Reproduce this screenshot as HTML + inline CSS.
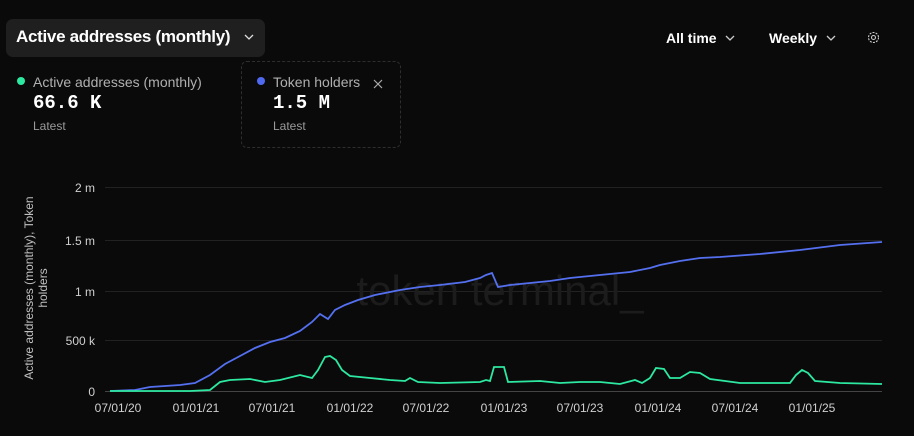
<!DOCTYPE html><html><head><style>
body{margin:0;width:914px;height:436px;background:#0a0a0a;font-family:"Liberation Sans",sans-serif;color:#fff;position:relative;overflow:hidden}
.abs{position:absolute}
.sel{left:6px;top:19px;width:259px;height:38px;background:#1f1f1f;border-radius:7px}
.sel span{position:absolute;left:10px;top:8px;font-size:17px;font-weight:bold;letter-spacing:-0.3px}
.lbl{font-size:14px;color:#b0b0b0}
.val{font-family:"Liberation Mono",monospace;font-size:19px;font-weight:bold}
.lat{font-size:12px;color:#9a9a9a}
.dot{width:8px;height:8px;border-radius:50%}
.tick{font-size:12px;color:#d0d0d0}
</style></head><body>
<div class="abs sel"><span>Active addresses (monthly)</span>
<svg class="abs" style="left:238px;top:15px" width="10" height="7"><path d="M1 1L5 5L9 1" stroke="#ddd" fill="none" stroke-width="1.3"/></svg></div>
<div class="abs" style="left:666px;top:30px;font-size:14px;font-weight:bold">All time</div>
<svg class="abs" style="left:725px;top:35px" width="10" height="7"><path d="M1 1L5 5L9 1" stroke="#ccc" fill="none" stroke-width="1.3"/></svg>
<div class="abs" style="left:769px;top:30px;font-size:14px;font-weight:bold">Weekly</div>
<svg class="abs" style="left:826px;top:35px" width="10" height="7"><path d="M1 1L5 5L9 1" stroke="#ccc" fill="none" stroke-width="1.3"/></svg>
<svg class="abs" style="left:867px;top:31px" width="13" height="13"><circle cx="6.5" cy="6.5" r="2" stroke="#ccc" fill="none" stroke-width="1.1"/><circle cx="6.5" cy="6.5" r="5" stroke="#ccc" fill="none" stroke-width="1.1" stroke-dasharray="2 1.2"/></svg>
<div class="abs dot" style="left:17px;top:77px;background:#2de8a0"></div>
<div class="abs lbl" style="left:33px;top:74px">Active addresses (monthly)</div>
<div class="abs val" style="left:33px;top:92px">66.6 K</div>
<div class="abs lat" style="left:33px;top:119px">Latest</div>
<div class="abs" style="left:241px;top:61px;width:158px;height:85px;border:1px dashed #2e2e2e;border-radius:6px"></div>
<div class="abs dot" style="left:257px;top:77px;background:#4f6af0"></div>
<div class="abs lbl" style="left:273px;top:74px">Token holders</div>
<svg class="abs" style="left:373px;top:79px" width="10" height="10"><path d="M1 1L9 9M9 1L1 9" stroke="#aaa" stroke-width="1.2"/></svg>
<div class="abs val" style="left:273px;top:92px">1.5 M</div>
<div class="abs lat" style="left:273px;top:119px">Latest</div>
<svg class="abs" style="left:0;top:0" width="914" height="436">
<g stroke="#222" stroke-width="1"><line x1="105" x2="882" y1="187.5" y2="187.5"/><line x1="105" x2="882" y1="240.5" y2="240.5"/><line x1="105" x2="882" y1="291.5" y2="291.5"/><line x1="105" x2="882" y1="340.5" y2="340.5"/><line x1="105" x2="882" y1="391.5" y2="391.5" stroke="#444"/></g>
<text x="500" y="305" text-anchor="middle" font-family="Liberation Sans" font-size="42" fill="#1c1c1c">token terminal_</text>
<g font-family="Liberation Sans" font-size="12" fill="#d0d0d0" text-anchor="end"><text x="95" y="192">2 m</text><text x="95" y="245">1.5 m</text><text x="95" y="296">1 m</text><text x="95" y="345">500 k</text><text x="95" y="396">0</text></g>
<g font-family="Liberation Sans" font-size="12" fill="#d0d0d0" text-anchor="middle"><text x="118" y="412">07/01/20</text><text x="196" y="412">01/01/21</text><text x="272" y="412">07/01/21</text><text x="350" y="412">01/01/22</text><text x="426" y="412">07/01/22</text><text x="504" y="412">01/01/23</text><text x="580" y="412">07/01/23</text><text x="658" y="412">01/01/24</text><text x="735" y="412">07/01/24</text><text x="812" y="412">01/01/25</text></g>
<text transform="translate(33,288) rotate(-90)" text-anchor="middle" font-family="Liberation Sans" font-size="12" fill="#c0c0c0">Active addresses (monthly), Token</text>
<text transform="translate(47,288) rotate(-90)" text-anchor="middle" font-family="Liberation Sans" font-size="12" fill="#c0c0c0">holders</text>
<polyline fill="none" stroke="#5470f0" stroke-width="1.8" points="110,391 135,390 150,387 180,385 195,383 210,375 225,364 240,356 255,348 270,342 285,338 300,331 312,322 320,314 328,319 335,310 345,305 358,300 375,295 400,290 420,287 440,285 465,282 480,278 486,275 492,273 498,287 510,285 530,283 550,281 570,278 590,276 610,274 630,272 650,268 660,265 680,261 700,258 720,257 760,254 800,250 840,245 882,242"/>
<polyline fill="none" stroke="#2de8a0" stroke-width="1.8" points="110,391 190,391 210,390 220,382 230,380 250,379 265,382 280,380 300,375 312,378 318,370 325,357 330,356 336,360 342,370 350,376 370,378 390,380 405,381 410,378 418,382 440,383 480,382 486,380 490,381 494,367 504,367 508,382 540,381 560,383 580,382 600,382 620,384 635,380 642,383 650,378 656,368 664,369 670,378 680,378 690,372 700,373 710,379 740,383 790,383 796,375 802,370 808,373 815,381 840,383 882,384"/>
</svg>
</body></html>
